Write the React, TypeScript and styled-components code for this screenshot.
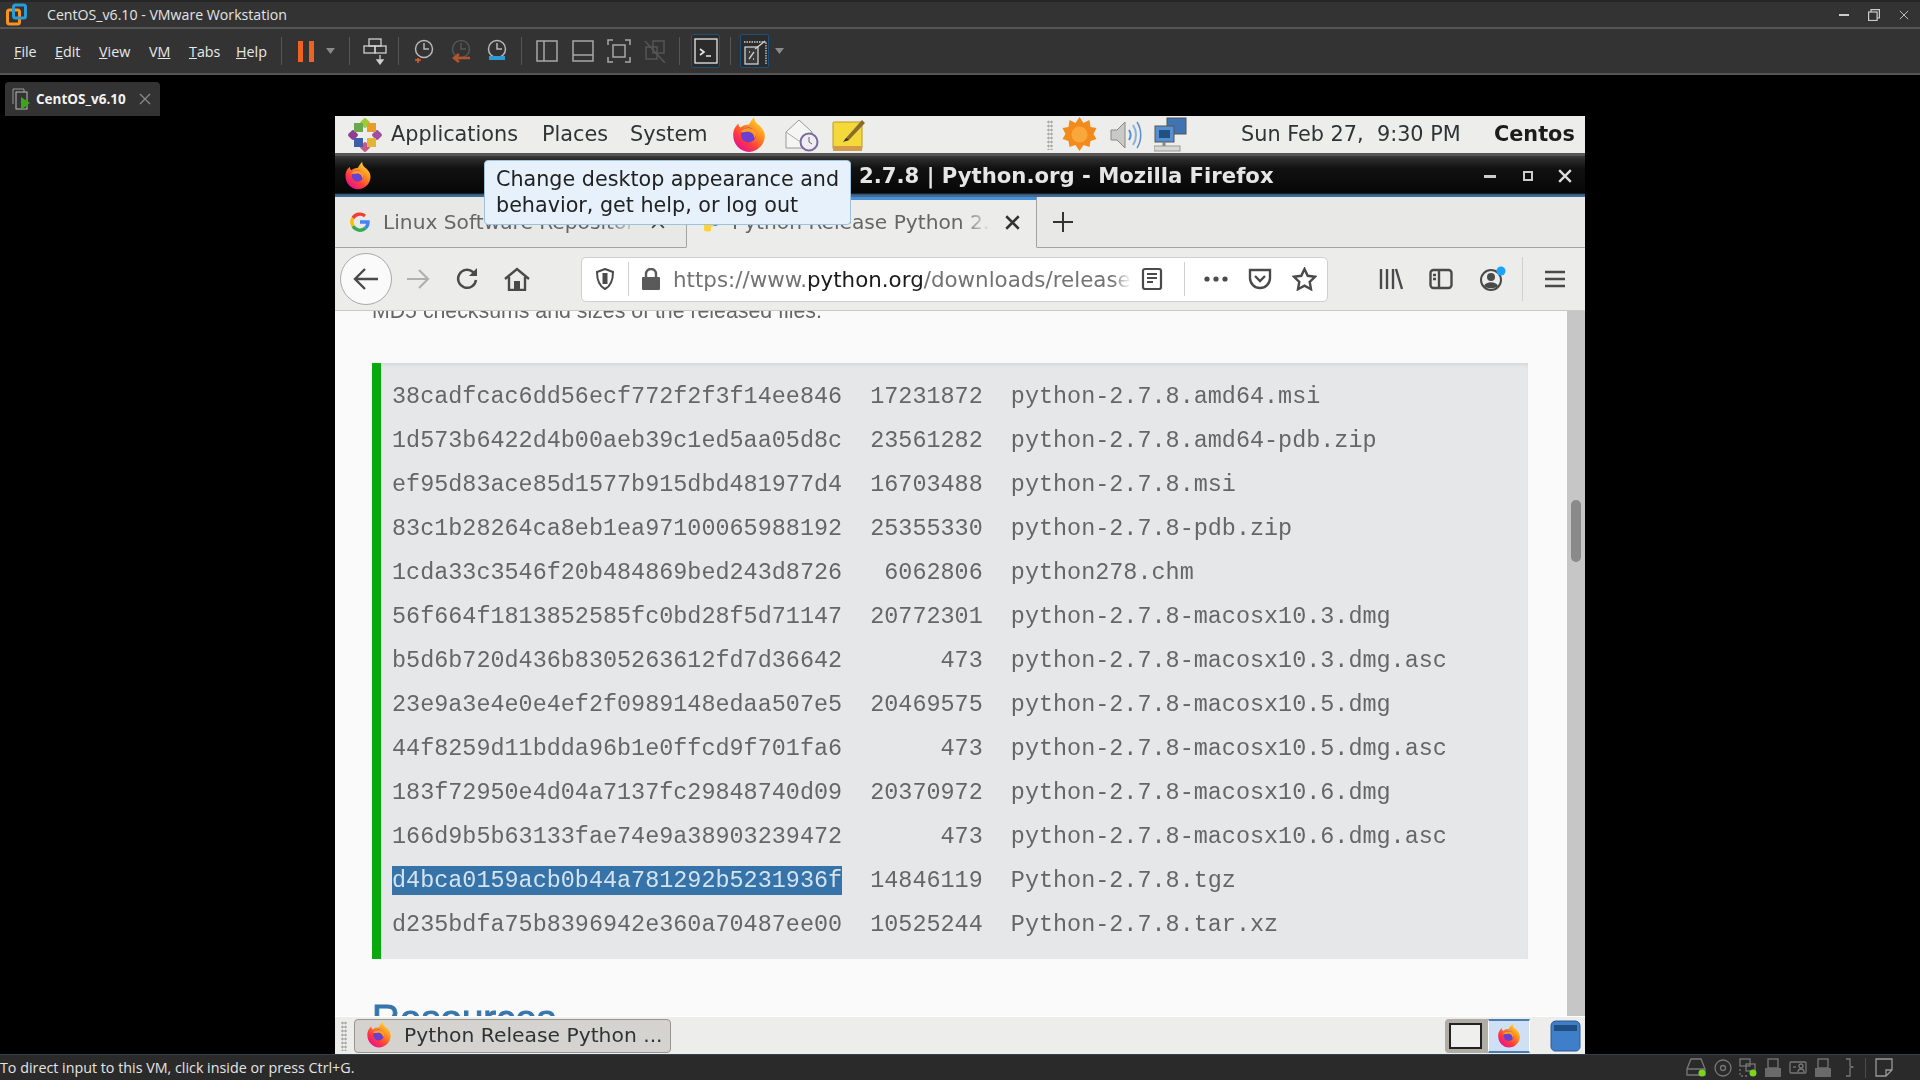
import React, { useId } from "react";
import styled, { createGlobalStyle } from "styled-components";

const Global = createGlobalStyle`
  html, body { margin: 0; padding: 0; background: #000; overflow: hidden; }
  #root { width: 1920px; height: 1080px; }
  * { box-sizing: border-box; }
`;

const Shell = styled.div`
  width: 1920px; height: 1080px; display: flex; flex-direction: column; background: #000;
  font-family: "Open Sans", "Noto Sans", sans-serif; color: #e8e8e8;
`;
const TitleBar = styled.header`
  height: 29px; background: #333; border-top: 2px solid #262626; border-bottom: 2px solid #555;
  display: flex; align-items: center; padding-left: 6px; position: relative; flex: none;
`;
const TitleText = styled.span`font-size: 14.15px; color: #e4e4e4; margin-left: 20px; white-space: nowrap;`;
const WindowControls = styled.div`margin-left: auto; display: flex; align-items: center; padding-right: 11px; gap: 19px;`;
const MenuBar = styled.nav`
  height: 46px; background: #333; border-bottom: 2px solid #555; display: flex; align-items: center;
  padding-left: 14px; flex: none;
`;
const Menu = styled.span<{ $w: number }>`width: ${p => p.$w}px; font-size: 14.3px; color: #e8e8e8; flex: none;`;
const Sep = styled.i<{ $l: number }>`width: 1px; height: 28px; background: #555; margin-left: ${p => p.$l}px; flex: none;`;
const ToolSlot = styled.span<{ $l: number; $boxed?: boolean }>`
  margin-left: ${p => p.$l}px; display: flex; flex: none; align-items: center; justify-content: center;
  ${p => p.$boxed ? "border: 1px solid #1f4e79; border-radius: 2px; background: #2b2b2b; width: 29px; height: 34px;" : ""}
`;
const TabRow = styled.div`height: 41px; background: #000; padding: 7px 0 0 5px; flex: none; display: flex;`;
const VmTab = styled.div`
  width: 155px; height: 34px; background: #333; border-radius: 4px 4px 0 0; display: flex; align-items: center;
  padding-left: 7px; font-weight: 700; font-size: 13.5px; color: #f2f2f2; gap: 5px;
`;
const TabClose = styled.span`margin-left: 8px; display: flex;`;
const Stage = styled.main`flex: 1; min-height: 0; padding-left: 335px; display: flex; background: #000;`;
const Guest = styled.section`
  width: 1250px; height: 938px; position: relative; display: flex; flex-direction: column;
  font-family: "DejaVu Sans", sans-serif; filter: blur(0.45px); background: #eee;
`;
const TopPanel = styled.div`
  height: 37px; background: #ededeb; display: flex; align-items: center; padding-left: 13px; flex: none; color: #2e3436;
`;
const PanelItem = styled.span<{ $w: number }>`font-size: 20.8px; width: ${p => p.$w}px; flex: none; white-space: nowrap; color: #2e3436; margin-top: -2px;`;
const PanelIcon = styled.span<{ $l: number }>`margin-left: ${p => p.$l}px; display: flex; flex: none;`;
const Clock = styled.span`font-size: 20.8px; margin: -2px 0 0 53px; width: 253px; flex: none; white-space: nowrap; color: #2e3436;`;
const User = styled.b`font-size: 20.8px; color: #1c1c1c; margin-top: -2px; white-space: nowrap;`;
const WinTitle = styled.div`
  height: 44px; flex: none; background: linear-gradient(#3b3b3b 0, #2a2a2a 8%, #111 30%, #070707 90%, #3f6a92 95%, #3f6a92 100%);
  border-top: 3px solid #555;
  display: flex; align-items: center; padding: 0 0 2px 8px; position: relative;
`;
const WinText = styled.span`
  font-weight: 700; font-size: 21.2px; color: #e6e6e6; margin-left: 486px; white-space: nowrap; width: 545px; flex: none;
`;
const WinBtn = styled.span<{ $l: number }>`margin-left: ${p => p.$l}px; display: flex; flex: none;`;
const Tabs = styled.div`height: 51px; flex: none; background: #e8e8e7; display: flex; border-bottom: 1px solid #a3a3a3; position: relative;`;
const BrowserTab = styled.div<{ $active?: boolean }>`
  width: 351px; height: ${p => p.$active ? "51px" : "50px"}; display: flex; align-items: center; padding: 0 0 ${p => p.$active ? 3 : 1}px ${p => p.$active ? 12 : 15}px; gap: ${p => p.$active ? 13 : 13}px;
  font-size: 20.2px; color: #666; white-space: nowrap; overflow: hidden; position: relative; flex: none;
  ${p => p.$active ? "background: #ececeb; border-top: 3px solid #4a90d9; border-left: 1px solid #a3a3a3; border-right: 1px solid #a3a3a3; border-bottom: 1px solid #ececeb;" : ""}
`;
const TabLabel = styled.span`
  flex: 1; overflow: hidden;
  mask-image: linear-gradient(90deg, #000 88%, transparent 100%);
`;
const TabX = styled.span<{ $mr: number }>`margin-right: ${p => p.$mr}px; display: flex; flex: none;`;
const PlusSlot = styled.span`margin-left: 15px; display: flex; align-items: center;`;
const NavBar = styled.div`height: 63px; flex: none; background: #ececeb; border-bottom: 1px solid #c9c9c9; display: flex; align-items: center; padding-left: 5px;`;
const BackBtn = styled.span`width: 52px; height: 52px; border-radius: 50%; background: #fafafa; border: 1px solid #aaa; display: flex; align-items: center; justify-content: center; flex: none;`;
const NavSlot = styled.span<{ $l: number }>`margin-left: ${p => p.$l}px; display: flex; flex: none;`;
const UrlBar = styled.div`
  width: 747px; height: 45px; margin-left: 51px; background: #fff; border: 1px solid #cfcfcf; border-radius: 5px; flex: none;
  display: flex; align-items: center; padding-left: 13px;
`;
const UrlDivider = styled.i<{ $l: number }>`width: 1px; height: 34px; background: #cfcfcf; margin-left: ${p => p.$l}px; flex: none;`;
const UrlText = styled.span`
  width: 458px; overflow: hidden; white-space: nowrap; font-size: 21.4px; color: #737373; margin-left: 12px; flex: none;
  mask-image: linear-gradient(90deg, #000 96%, transparent 100%);
  b { font-weight: 400; color: #1a1a1a; }
`;
const NavDivider = styled.i`width: 1px; height: 44px; background: #d0d0d0; margin-left: 16px; flex: none;`;
const Viewport = styled.div`flex: 1; min-height: 0; display: flex; background: #fafafa; overflow: hidden;`;
const Page = styled.article`flex: 1; min-width: 0; padding-left: 37px; overflow: hidden;`;
const Intro = styled.p`margin: -14px 0 0; height: 28px; font-family: "Liberation Sans", sans-serif; font-size: 21.3px; line-height: 28px; color: #666; white-space: nowrap;`;
const Code = styled.pre`
  margin: 37.5px 0 0; width: 1156px; height: 596.5px; background: #e6e7e9; border-left: 9px solid #0aa80f;
  padding: 12px 0 0 11px; font-family: "Liberation Mono", monospace; font-size: 23.45px; line-height: 44px; color: #666;
  box-shadow: inset 0 3px 4px -2px rgba(0,0,0,.1); white-space: pre;
`;
const Selected = styled.span`background: #3573a8; color: #d5e3ef; padding: 1px 0; line-height: 26px;`;
const Heading = styled.h2`margin: 39.5px 0 0; font-family: "Liberation Sans", sans-serif; font-weight: 400; font-size: 38.5px; line-height: 40px; color: #3776ab; -webkit-text-stroke: 1px #3776ab;`;
const Scrollbar = styled.div`width: 18px; flex: none; background: #c6c6c6; display: flex; justify-content: center; padding-top: 189px;`;
const Thumb = styled.i`width: 10px; height: 62px; border-radius: 5px; background: #8a8a8a;`;
const BottomPanel = styled.div`height: 38px; flex: none; background: #ededeb; display: flex; align-items: center; padding-left: 6px; border-top: 1px solid #fff;`;
const Grip = styled.i`width: 6px; height: 30px; flex: none; background-image: radial-gradient(#aaa 1px, transparent 1.2px); background-size: 3px 4px;`;
const TaskBtn = styled.div`
  width: 317px; height: 34px; margin-left: 7px; background: #d5d3cf; border: 1px solid #98958f; border-radius: 4px; flex: none;
  display: flex; align-items: center; padding: 0 0 2px 10px; gap: 11px; font-size: 20.3px; color: #2e3436; white-space: nowrap;
`;
const Switcher = styled.div`margin-left: 774px; width: 85px; height: 34px; background: #b0aca6; border-radius: 4px; display: flex; align-items: center; padding-left: 4px; flex: none;`;
const Workspace = styled.i`width: 33px; height: 26px; background: #efefed; border: 2px solid #222; flex: none;`;
const WorkspaceActive = styled.span`width: 42px; height: 34px; margin-left: 6px; background: #cfe0f4; border-top: 2px solid #4a7cb0; border-bottom: 2px solid #4a7cb0; border-left: 1px solid #fff; border-right: 1px solid #fff; display: flex; align-items: center; justify-content: center; flex: none;`;
const Trash = styled.span`margin-left: 20px; display: flex; flex: none;`;
const Tooltip = styled.div`
  position: absolute; left: 149px; top: 44px; width: 367px; height: 65px; background: #e6f1fb; border: 1px solid #9fc1e0; border-radius: 4px;
  font-size: 20.7px; line-height: 26px; color: #222; padding: 5px 0 0 11px; white-space: nowrap;
`;
const StatusBar = styled.footer`height: 26px; flex: none; background: #2a2a2a; display: flex; align-items: center; font-size: 14.3px; color: #e4e4e4; border-top: 1px solid #34404a;`;
const StatusIcons = styled.div`margin-left: auto; padding-right: 27px; display: flex; align-items: center; gap: 7px;`;
const BraceSlot = styled.span`margin-left: 6px; display: flex;`;
const StatusSep = styled.i`width: 1px; height: 20px; background: #34506a; margin: 0 2px 0 4px;`;

const Firefox = ({ s = 36 }: { s?: number }) => {
  const id = useId();
  return (
    <svg width={s} height={s} viewBox="0 0 36 36">
      <defs>
        <linearGradient id={id} x1="0.8" y1="0.1" x2="0.2" y2="0.9">
          <stop offset="0" stopColor="#ffd02e" /><stop offset=".35" stopColor="#ff8a1e" />
          <stop offset=".7" stopColor="#ff3c3c" /><stop offset="1" stopColor="#e6148c" />
        </linearGradient>
      </defs>
      <path d="M3 18C3 12 6 9 8 7c0 2 1 3 2 4 2-2 5-3 8-3 1-2 3-5 5-7 0 4 2 6 5 8 3 3 5 6 5 10 0 8-7 15-15 15S3 27 3 18z" fill={`url(#${id})`} />
      <circle cx="17.5" cy="18" r="7" fill="#6b3fd0" />
      <path d="M10 15c3-4 10-5 14-1 1 2 1 5-1 7 0-4-3-6-6-6-3 0-5 1-7 0z" fill="#ff9a24" />
    </svg>
  );
};

const VmwareLogo = () => (
  <svg width="21" height="23" viewBox="0 0 21 23" fill="none" strokeWidth="3">
    <rect x="1.5" y="7" width="12" height="14" rx="2" stroke="#f7941d" />
    <rect x="7.5" y="2" width="12" height="13" rx="2" stroke="#2f9bd6" />
  </svg>
);
const Pause = () => (
  <svg width="16" height="21" viewBox="0 0 16 21"><rect x="0" width="5" height="21" fill="#f0621f" /><rect x="11" width="5" height="21" fill="#f0621f" /></svg>
);
const Drop = () => <svg width="9" height="6" viewBox="0 0 9 6"><path d="M0 0h9L4.5 6z" fill="#8a8a8a" /></svg>;
const SendKeys = () => (
  <svg width="24" height="27" viewBox="0 0 24 27" fill="none" stroke="#cfcfcf" strokeWidth="1.3">
    <rect x="6" y="1" width="12" height="7" /><rect x="1" y="8" width="11" height="7" /><rect x="12" y="8" width="11" height="7" />
    <path d="M17 17v6" /><path d="M14 22h6l-3 4z" fill="#cfcfcf" />
  </svg>
);
const Snapshot = ({ color = "#b8b8b8", children }: { color?: string; children?: React.ReactNode }) => (
  <svg width="22" height="24" viewBox="0 0 22 24" fill="none" stroke={color} strokeWidth="1.5">
    <circle cx="11" cy="10" r="8.5" /><path d="M11 4v6h5" />{children}
  </svg>
);
const Layout = ({ kind }: { kind: number }) => (
  <svg width="24" height="24" viewBox="0 0 24 24" fill="none" stroke={kind === 3 ? "#555" : "#a8a8a8"} strokeWidth="1.5">
    {kind === 0 && <><rect x="2" y="2" width="20" height="20" /><path d="M9 2v20" /></>}
    {kind === 1 && <><rect x="2" y="2" width="20" height="20" /><path d="M2 16h20" /></>}
    {kind === 2 && <><path d="M1 6V1h5M18 1h5v5M23 18v5h-5M6 23H1v-5" /><rect x="6" y="6" width="12" height="12" /></>}
    {kind === 3 && <><rect x="3" y="8" width="11" height="12" /><rect x="10" y="2" width="11" height="12" /><path d="M2 2l20 22" /></>}
  </svg>
);
const Terminal = () => (
  <svg width="24" height="26" viewBox="0 0 24 26" fill="none" stroke="#e8e8e8" strokeWidth="1.3">
    <rect x="1" y="1" width="22" height="24" /><path d="M6 11l4 3-4 3M12 18h5" strokeWidth="1.6" />
  </svg>
);
const Stretch = () => (
  <svg width="24" height="28" viewBox="0 0 24 28" fill="none" stroke="#cfcfcf" strokeWidth="1.3">
    <path d="M1 5h18l4 0v23" strokeDasharray="1.500 1" /><rect x="2" y="10" width="13" height="17" fill="#3a3a3a" /><path d="M12 12L22 4" />
    <path d="M6 22l5-7M6 15h1M10 22h1" />
  </svg>
);
const VmIcon = () => (
  <svg width="19" height="23" viewBox="0 0 19 23" fill="none">
    <path d="M1 16V1h11v3" stroke="#999" /><rect x="4" y="4" width="11" height="17" stroke="#bbb" />
    <path d="M9 9l9 6-9 7z" fill="#3ca51a" />
  </svg>
);
const Cross = ({ s, c, w = 1.6 }: { s: number; c: string; w?: number }) => (
  <svg width={s} height={s} viewBox="0 0 12 12" stroke={c} strokeWidth={w}><path d="M1 1l10 10M11 1L1 11" /></svg>
);
const Flower = () => (
  <svg width="34" height="34" viewBox="0 0 34 34">
    <g>
      <rect x="13" y="1" width="8" height="8" rx="2" fill="#9ccb3b" transform="rotate(45 17 5)" />
      <rect x="13" y="25" width="8" height="8" rx="2" fill="#c55a8a" transform="rotate(45 17 29)" />
      <rect x="1" y="13" width="8" height="8" rx="2" fill="#8e3f94" transform="rotate(45 5 17)" />
      <rect x="25" y="13" width="8" height="8" rx="2" fill="#a34f9f" transform="rotate(45 29 17)" />
      <rect x="6" y="5" width="9" height="9" fill="#6aa84f" />
      <rect x="19" y="5" width="9" height="9" fill="#e79d2a" />
      <rect x="6" y="20" width="9" height="9" fill="#3d5fa8" />
      <rect x="19" y="20" width="9" height="9" fill="#e3b532" />
    </g>
  </svg>
);
const Mail = () => (
  <svg width="36" height="34" viewBox="0 0 36 34">
    <path d="M2 14L15 2l13 12v16H2z" fill="#f5f5f3" stroke="#999" />
    <path d="M2 14l13 9 13-9" fill="none" stroke="#aaa" />
    <circle cx="25" cy="24" r="8.5" fill="#efedf3" stroke="#7d6a9c" strokeWidth="2" />
    <path d="M25 19v5l3 2" fill="none" stroke="#666" />
  </svg>
);
const Notes = () => (
  <svg width="35" height="34" viewBox="0 0 35 34">
    <rect x="1" y="4" width="29" height="27" rx="1" fill="#f3d93a" stroke="#bf9a1e" />
    <rect x="1" y="28" width="29" height="5" fill="#d39a4a" />
    <path d="M14 20L30 2l3 3-16 17-4 1z" fill="#8b6b2e" />
    <path d="M11 24l3-4 3 2z" fill="#333" />
  </svg>
);
const Sun = () => (
  <svg width="35" height="35" viewBox="0 0 35 35">
    <path d="M17.5 0l4 6 6-3 1 7 6 1-3 6 3 5-6 2-1 6-6-2-4 6-4-6-6 2-1-6-6-2 3-5-3-6 6-1 1-7 6 3z" fill="#f28a1c" />
    <circle cx="17.5" cy="17.5" r="8" fill="#f9a63a" />
  </svg>
);
const Volume = () => (
  <svg width="34" height="32" viewBox="0 0 34 32" fill="none">
    <path d="M2 11h6l8-8v26l-8-8H2z" fill="#c9c9c6" stroke="#888" />
    <path d="M20 11c2 3 2 7 0 10" stroke="#5a8fc7" strokeWidth="2" />
    <path d="M24 6c4 6 4 14 0 20" stroke="#8cb1da" strokeWidth="2" />
    <path d="M28 3c5 8 5 18 0 26" stroke="#5a8fc7" strokeWidth="1.5" />
  </svg>
);
const Network = () => (
  <svg width="34" height="36" viewBox="0 0 34 36">
    <rect x="13" y="1" width="19" height="16" fill="#3f74b3" stroke="#555" />
    <rect x="1" y="9" width="19" height="16" fill="#5590d0" stroke="#555" />
    <rect x="5" y="13" width="11" height="8" fill="#24507f" />
    <rect x="0" y="29" width="26" height="5" fill="#d8d8d4" stroke="#999" />
    <path d="M10 25v4" stroke="#888" strokeWidth="3" />
  </svg>
);
const Google = () => (
  <svg width="20" height="20" viewBox="0 0 20 20" fill="none" strokeWidth="3.4">
    <path d="M10 10h8a8 8 0 0 1-2.5 6" stroke="#4285f4" /><path d="M15.5 16A8 8 0 0 1 3 14" stroke="#34a853" />
    <path d="M3 14a8 8 0 0 1 0-8" stroke="#fbbc05" /><path d="M3 6a8 8 0 0 1 12-2" stroke="#ea4335" />
  </svg>
);
const PyIcon = () => (
  <svg width="20" height="20" viewBox="0 0 20 20"><path d="M5 10V4c0-3 10-3 10 0v3H9v1h8c3 0 3 6 0 6h-3v-3c0-2-9 0-9-1z" fill="#4b8bbe" /><path d="M5 9h10v3c0 2-1 3-3 3v3c0 2-6 2-7 0z" fill="#ffd43b" /></svg>
);
const Plus = () => <svg width="22" height="22" viewBox="0 0 22 22" stroke="#333" strokeWidth="2"><path d="M11 1v20M1 11h20" /></svg>;
const glyph = { fill: "none", stroke: "#4a4a4a", strokeWidth: 2 };
const Back = () => <svg width="26" height="24" viewBox="0 0 26 24" {...glyph} strokeWidth={2.4}><path d="M25 12H3M12 2L2 12l10 10" /></svg>;
const Forward = () => <svg width="24" height="22" viewBox="0 0 24 22" {...glyph} stroke="#b0b0b0" strokeWidth={2.2}><path d="M0 11h21M12 2l9 9-9 9" /></svg>;
const Reload = () => <svg width="24" height="24" viewBox="0 0 24 24" {...glyph} strokeWidth={2.4}><path d="M21 13a9 9 0 1 1-3-8l3 3" /><path d="M22 1v8h-8" fill="#4a4a4a" stroke="none" /></svg>;
const Home = () => <svg width="26" height="24" viewBox="0 0 26 24" {...glyph} strokeWidth={2.4}><path d="M1 12L13 2l12 10M5 10v13h16V10" /><rect x="10" y="14" width="6" height="9" fill="#4a4a4a" stroke="none" /></svg>;
const Shield = () => <svg width="20" height="22" viewBox="0 0 20 22" {...glyph}><path d="M10 1l8 3c0 8-2 14-8 17C4 18 2 12 2 4z" /><path d="M10 5v11" strokeWidth={5} /></svg>;
const Lock = () => <svg width="20" height="22" viewBox="0 0 20 22"><rect x="1" y="9" width="18" height="13" rx="1" fill="#5a5a5a" /><path d="M5 9V6a5 5 0 0 1 10 0v3" fill="none" stroke="#5a5a5a" strokeWidth="2.4" /></svg>;
const Reader = () => <svg width="22" height="24" viewBox="0 0 22 24" {...glyph} strokeWidth={2.2}><rect x="2" y="2" width="18" height="20" rx="2" /><path d="M6 7h10M6 11h10M6 15h6" /></svg>;
const Dots = () => <svg width="24" height="6" viewBox="0 0 24 6" fill="#4a4a4a"><circle cx="3" cy="3" r="2.6" /><circle cx="12" cy="3" r="2.6" /><circle cx="21" cy="3" r="2.6" /></svg>;
const Pocket = () => <svg width="24" height="22" viewBox="0 0 24 22" {...glyph} strokeWidth={2.4}><path d="M2 2h20v8a10 10 0 0 1-20 0z" /><path d="M7 8l5 5 5-5" /></svg>;
const Star = () => <svg width="25" height="24" viewBox="0 0 25 24" {...glyph} strokeWidth={2.4}><path d="M12.5 2l3.2 6.8 7.3 1-5.3 5.1 1.3 7.3-6.5-3.6L6 22.2l1.3-7.3L2 9.800l7.300-1z" /></svg>;
const Library = () => <svg width="24" height="22" viewBox="0 0 24 22" {...glyph} strokeWidth={2.4}><path d="M2 1v20M8 1v20M14 1v20M17 1l6 20" /></svg>;
const Sidebar = () => <svg width="24" height="22" viewBox="0 0 24 22" {...glyph} strokeWidth={2.4}><rect x="1.500" y="2" width="21" height="18" rx="3" /><path d="M10 2v18M4 7h3M4 11h3" /></svg>;
const Account = () => (
  <svg width="26" height="26" viewBox="0 0 26 26" fill="none">
    <circle cx="11" cy="14" r="10" stroke="#4a4a4a" strokeWidth="2" /><circle cx="11" cy="11" r="4" fill="#4a4a4a" />
    <path d="M4 20c2-5 12-5 14 0-3 3-11 3-14 0z" fill="#4a4a4a" /><circle cx="21" cy="5" r="4.500" fill="#1aa3ff" />
  </svg>
);
const Burger = () => <svg width="20" height="18" viewBox="0 0 20 18" {...glyph} strokeWidth={2.4}><path d="M0 2h20M0 9h20M0 16h20" /></svg>;
const TrashIcon = () => (
  <svg width="31" height="32" viewBox="0 0 31 32">
    <path d="M1 6c0-3 2-5 5-5h19c3 0 5 2 5 5v21c0 2-2 4-4 4H5c-2 0-4-2-4-4z" fill="#3f7fc9" stroke="#2a5a94" />
    <path d="M4 5h23v6H4z" fill="#1f4e82" />
  </svg>
);
const si = { fill: "none", stroke: "#777", strokeWidth: 1.3 };
const HardDisk = () => <svg width="21" height="19" viewBox="0 0 21 19" {...si}><path d="M1 17V11L5 1h10l4 10v6zM1 11h18" /><circle cx="16" cy="15" r="3.500" fill="#7ed321" stroke="none" /></svg>;
const Cd = () => <svg width="18" height="18" viewBox="0 0 18 18" {...si}><circle cx="9" cy="9" r="8" /><circle cx="9" cy="9" r="2.500" /></svg>;
const Net = () => <svg width="18" height="19" viewBox="0 0 18 19" {...si}><rect x="1" y="1" width="10" height="7" /><rect x="7" y="6" width="9" height="7" /><path d="M1 11v7h8" strokeDasharray="2 2" /><circle cx="14" cy="15" r="3.500" fill="#7ed321" stroke="none" /></svg>;
const Usb = () => <svg width="18" height="19" viewBox="0 0 18 19" {...si}><rect x="4" y="1" width="10" height="9" /><rect x="1" y="10" width="16" height="9" fill="#6a6a6a" stroke="none" /></svg>;
const CardReader = () => <svg width="18" height="13" viewBox="0 0 18 13" {...si}><rect x="1" y="1" width="16" height="11" rx="1" /><path d="M4 6h3" /><circle cx="12" cy="5" r="2" /><path d="M9 11c0-4 6-4 6 0" /></svg>;
const Brace = () => <svg width="9" height="19" viewBox="0 0 9 19" {...si}><path d="M1 1h4v7l3 1-3 1v8H1" /></svg>;
const NoteIcon = () => <svg width="18" height="19" viewBox="0 0 18 19" {...si} stroke="#999"><path d="M1 1h16v11l-6 6H1zM17 12h-6v6" /></svg>;

const ROWS = [
  "38cadfcac6dd56ecf772f2f3f14ee846  17231872  python-2.7.8.amd64.msi",
  "1d573b6422d4b00aeb39c1ed5aa05d8c  23561282  python-2.7.8.amd64-pdb.zip",
  "ef95d83ace85d1577b915dbd481977d4  16703488  python-2.7.8.msi",
  "83c1b28264ca8eb1ea97100065988192  25355330  python-2.7.8-pdb.zip",
  "1cda33c3546f20b484869bed243d8726   6062806  python278.chm",
  "56f664f1813852585fc0bd28f5d71147  20772301  python-2.7.8-macosx10.3.dmg",
  "b5d6b720d436b8305263612fd7d36642       473  python-2.7.8-macosx10.3.dmg.asc",
  "23e9a3e4e0e4ef2f0989148edaa507e5  20469575  python-2.7.8-macosx10.5.dmg",
  "44f8259d11bdda96b1e0ffcd9f701fa6       473  python-2.7.8-macosx10.5.dmg.asc",
  "183f72950e4d04a7137fc29848740d09  20370972  python-2.7.8-macosx10.6.dmg",
  "166d9b5b63133fae74e9a38903239472       473  python-2.7.8-macosx10.6.dmg.asc",
];

export default function App() {
  return (
    <Shell>
      <Global />
      <TitleBar>
        <VmwareLogo />
        <TitleText>CentOS_v6.10 - VMware Workstation</TitleText>
        <WindowControls>
          <svg width="10" height="2"><rect width="10" height="2" fill="#ccc" /></svg>
          <svg width="12" height="12" viewBox="0 0 12 12" fill="none" stroke="#ccc" strokeWidth="1.2"><rect x=".6" y="3" width="8.500" height="8.500" /><path d="M3 3V.6h8.400V9H9" /></svg>
          <Cross s={10} c="#ccc" w={1.1} />
        </WindowControls>
      </TitleBar>
      <MenuBar>
        <Menu $w={41}><u>F</u>ile</Menu>
        <Menu $w={44}><u>E</u>dit</Menu>
        <Menu $w={50}><u>V</u>iew</Menu>
        <Menu $w={40}>V<u>M</u></Menu>
        <Menu $w={47}><u>T</u>abs</Menu>
        <Menu $w={44}><u>H</u>elp</Menu>
        <Sep $l={1} />
        <ToolSlot $l={16}><Pause /></ToolSlot>
        <ToolSlot $l={12}><Drop /></ToolSlot>
        <Sep $l={14} />
        <ToolSlot $l={13}><SendKeys /></ToolSlot>
        <Sep $l={11} />
        <ToolSlot $l={14}><Snapshot><path d="M5 19v5M2 21h6" stroke="#e0602a" /></Snapshot></ToolSlot>
        <ToolSlot $l={15}><Snapshot color="#555"><path d="M20 19H5M9 15l-5 4 5 4" stroke="#b3552a" strokeWidth="2.500" /></Snapshot></ToolSlot>
        <ToolSlot $l={14}><Snapshot><path d="M3 19h16" stroke="#2f9bd6" strokeWidth="4" /></Snapshot></ToolSlot>
        <Sep $l={13} />
        <ToolSlot $l={13}><Layout kind={0} /></ToolSlot>
        <ToolSlot $l={12}><Layout kind={1} /></ToolSlot>
        <ToolSlot $l={12}><Layout kind={2} /></ToolSlot>
        <ToolSlot $l={12}><Layout kind={3} /></ToolSlot>
        <Sep $l={12} />
        <ToolSlot $l={11} $boxed><Terminal /></ToolSlot>
        <Sep $l={10} />
        <ToolSlot $l={9} $boxed><Stretch /></ToolSlot>
        <ToolSlot $l={6}><Drop /></ToolSlot>
      </MenuBar>
      <TabRow>
        <VmTab>
          <VmIcon />CentOS_v6.10
          <TabClose><Cross s={12} c="#8a8a8a" w={1.3} /></TabClose>
        </VmTab>
      </TabRow>
      <Stage>
        <Guest>
          <TopPanel>
            <Flower />
            <PanelIcon $l={9} />
            <PanelItem $w={151}>Applications</PanelItem>
            <PanelItem $w={88}>Places</PanelItem>
            <PanelItem $w={100}>System</PanelItem>
            <PanelIcon $l={0}><Firefox s={38} /></PanelIcon>
            <PanelIcon $l={16}><Mail /></PanelIcon>
            <PanelIcon $l={12}><Notes /></PanelIcon>
            <PanelIcon $l={180}><Grip /></PanelIcon>
            <PanelIcon $l={9}><Sun /></PanelIcon>
            <PanelIcon $l={12}><Volume /></PanelIcon>
            <PanelIcon $l={11}><Network /></PanelIcon>
            <Clock>Sun Feb 27,&nbsp; 9:30 PM</Clock>
            <User>Centos</User>
          </TopPanel>
          <WinTitle>
            <Firefox s={30} />
            <WinText>2.7.8 | Python.org - Mozilla Firefox</WinText>
            <WinBtn $l={80}><svg width="12" height="4"><rect width="12" height="3" y="1" fill="#ccc" /></svg></WinBtn>
            <WinBtn $l={27}><svg width="10" height="10" fill="none" stroke="#ccc" strokeWidth="2"><rect x="1" y="1" width="8" height="8" /></svg></WinBtn>
            <WinBtn $l={25}><Cross s={14} c="#ddd" w={2} /></WinBtn>
          </WinTitle>
          <Tabs>
            <BrowserTab>
              <Google />
              <TabLabel>Linux Software Repositor</TabLabel>
              <TabX $mr={21}><Cross s={14} c="#444" w={1.6} /></TabX>
            </BrowserTab>
            <BrowserTab $active>
              <PyIcon />
              <TabLabel>Python Release Python 2.7.8</TabLabel>
              <TabX $mr={16}><Cross s={15} c="#333" w={2} /></TabX>
            </BrowserTab>
            <PlusSlot><Plus /></PlusSlot>
          </Tabs>
          <NavBar>
            <BackBtn><Back /></BackBtn>
            <NavSlot $l={15}><Forward /></NavSlot>
            <NavSlot $l={24}><Reload /></NavSlot>
            <NavSlot $l={25}><Home /></NavSlot>
            <UrlBar>
              <Shield />
              <UrlDivider $l={13} />
              <NavSlot $l={12}><Lock /></NavSlot>
              <UrlText>https://www.<b>python.org</b>/downloads/release</UrlText>
              <NavSlot $l={10}><Reader /></NavSlot>
              <UrlDivider $l={21} />
              <NavSlot $l={19}><Dots /></NavSlot>
              <NavSlot $l={20}><Pocket /></NavSlot>
              <NavSlot $l={20}><Star /></NavSlot>
            </UrlBar>
            <NavSlot $l={51}><Library /></NavSlot>
            <NavSlot $l={26}><Sidebar /></NavSlot>
            <NavSlot $l={27}><Account /></NavSlot>
            <NavDivider />
            <NavSlot $l={22}><Burger /></NavSlot>
          </NavBar>
          <Viewport>
            <Page>
              <Intro>MD5 checksums and sizes of the released files.</Intro>
              <Code>
                {ROWS.join("\n") + "\n"}
                <Selected>d4bca0159acb0b44a781292b5231936f</Selected>
                {"  14846119  Python-2.7.8.tgz\n"}
                {"d235bdfa75b8396942e360a70487ee00  10525244  Python-2.7.8.tar.xz"}
              </Code>
              <Heading>Resources</Heading>
            </Page>
            <Scrollbar><Thumb /></Scrollbar>
          </Viewport>
          <BottomPanel>
            <Grip />
            <TaskBtn><Firefox s={28} />Python Release Python ...</TaskBtn>
            <Switcher>
              <Workspace />
              <WorkspaceActive><Firefox s={26} /></WorkspaceActive>
            </Switcher>
            <Trash><TrashIcon /></Trash>
          </BottomPanel>
          <Tooltip>Change desktop appearance and<br />behavior, get help, or log out</Tooltip>
        </Guest>
      </Stage>
      <StatusBar>
        To direct input to this VM, click inside or press Ctrl+G.
        <StatusIcons>
          <HardDisk /><Cd /><Net /><Usb /><CardReader /><Usb /><BraceSlot><Brace /></BraceSlot><StatusSep /><NoteIcon />
        </StatusIcons>
      </StatusBar>
    </Shell>
  );
}
